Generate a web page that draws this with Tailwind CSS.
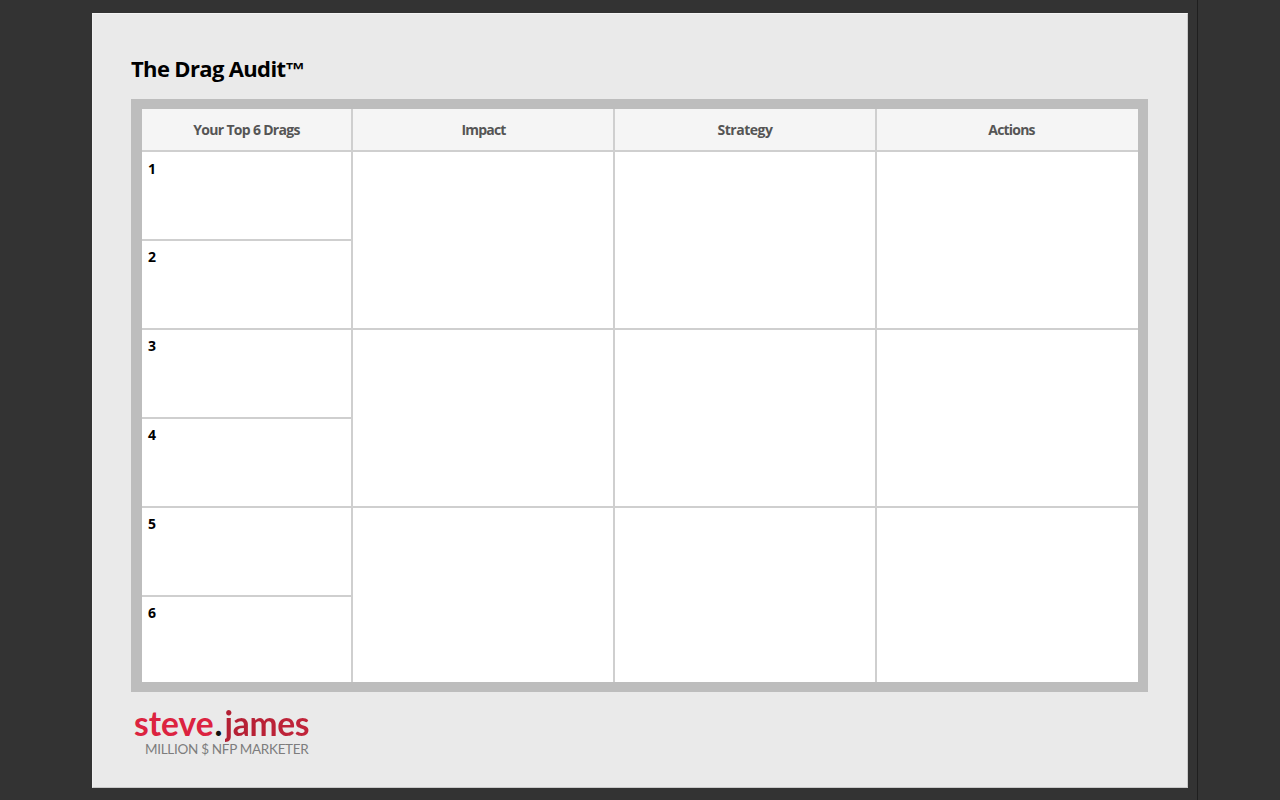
<!DOCTYPE html>
<html>
<head>
<meta charset="utf-8">
<script src="https://cdn.jsdelivr.net/npm/@tailwindcss/browser@4"></script>
</head>
<body class="m-0 h-[800px] w-[1280px] overflow-hidden bg-[#333333] font-['Open_Sans',sans-serif]">
<div class="flex h-[800px] w-[1280px]">
  <div class="w-[1197px] h-[800px] shrink-0 pl-[92px] pt-[13px]">
    <div class="h-[775px] w-[1096px] border border-[#c9c9c9] border-t-[#f4f4f4] border-l-[#f0f0f0] bg-[#eaeaea] pl-[38px] pt-[39px] box-border">
      <h1 class="m-0 h-[46px] text-[22px] leading-[31px] font-bold tracking-[-0.65px] whitespace-nowrap text-black">The Drag Audit<span class="font-['Liberation_Sans',sans-serif] text-[20px] tracking-[-0.5px]">™</span></h1>
      <div class="h-[593px] w-[1017px] box-border border-y-[10px] border-l-[11px] border-r-[10px] border-[#bdbdbd] bg-[#cfcfcf]">
        <div class="grid h-[573px] w-[996px] grid-cols-[209px_260px_260px_261px] grid-rows-[41px_87px_87px_87px_87px_87px_85px] gap-[2px] text-[14px] font-bold">
          <div class="flex items-center justify-center bg-[#f5f5f5] pb-[1px] text-[#555555] tracking-[-0.7px]">Your Top 6 Drags</div>
          <div class="flex items-center justify-center bg-[#f5f5f5] pb-[1px] pl-[1px] text-[#555555] tracking-[-0.8px]">Impact</div>
          <div class="flex items-center justify-center bg-[#f5f5f5] pb-[1px] text-[#555555] tracking-[-0.5px]">Strategy</div>
          <div class="flex items-center justify-center bg-[#f5f5f5] pb-[1px] pl-[8px] text-[#555555] tracking-[-0.8px]">Actions</div>

          <div class="bg-white pl-[6px] pt-[7px] leading-[20px] text-black">1</div>
          <div class="row-span-2 bg-white"></div>
          <div class="row-span-2 bg-white"></div>
          <div class="row-span-2 bg-white"></div>
          <div class="bg-white pl-[6px] pt-[6px] leading-[20px] text-black">2</div>

          <div class="bg-white pl-[6px] pt-[6px] leading-[20px] text-black">3</div>
          <div class="row-span-2 bg-white"></div>
          <div class="row-span-2 bg-white"></div>
          <div class="row-span-2 bg-white"></div>
          <div class="bg-white pl-[6px] pt-[6px] leading-[20px] text-black">4</div>

          <div class="bg-white pl-[6px] pt-[6px] leading-[20px] text-black">5</div>
          <div class="row-span-2 bg-white"></div>
          <div class="row-span-2 bg-white"></div>
          <div class="row-span-2 bg-white"></div>
          <div class="bg-white pl-[6px] pt-[6px] leading-[20px] text-black">6</div>
        </div>
      </div>
      <div class="pl-[3px] pt-[15px] font-['Lato',sans-serif]">
        <div class="h-[35px] text-[33.5px] leading-[32px] font-bold whitespace-nowrap"><span class="text-[#dc2340]">steve</span><span class="ml-[1px] text-[#111111]">.</span><span class="ml-[2px] bg-linear-to-r from-[#b32034] to-[#c1243a] bg-clip-text tracking-[-0.3px] text-transparent">james</span></div>
        <div class="pl-[11px] text-[13.5px] leading-[14px] font-normal tracking-[-0.3px] whitespace-nowrap text-[#7d7d7d]">MILLION $ NFP MARKETER</div>
      </div>
    </div>
  </div>
  <div class="h-[800px] w-px shrink-0 bg-[#1f1f1f]"></div>
  <div class="h-[800px] flex-1 bg-[#333333]"></div>
</div>
</body>
</html>
